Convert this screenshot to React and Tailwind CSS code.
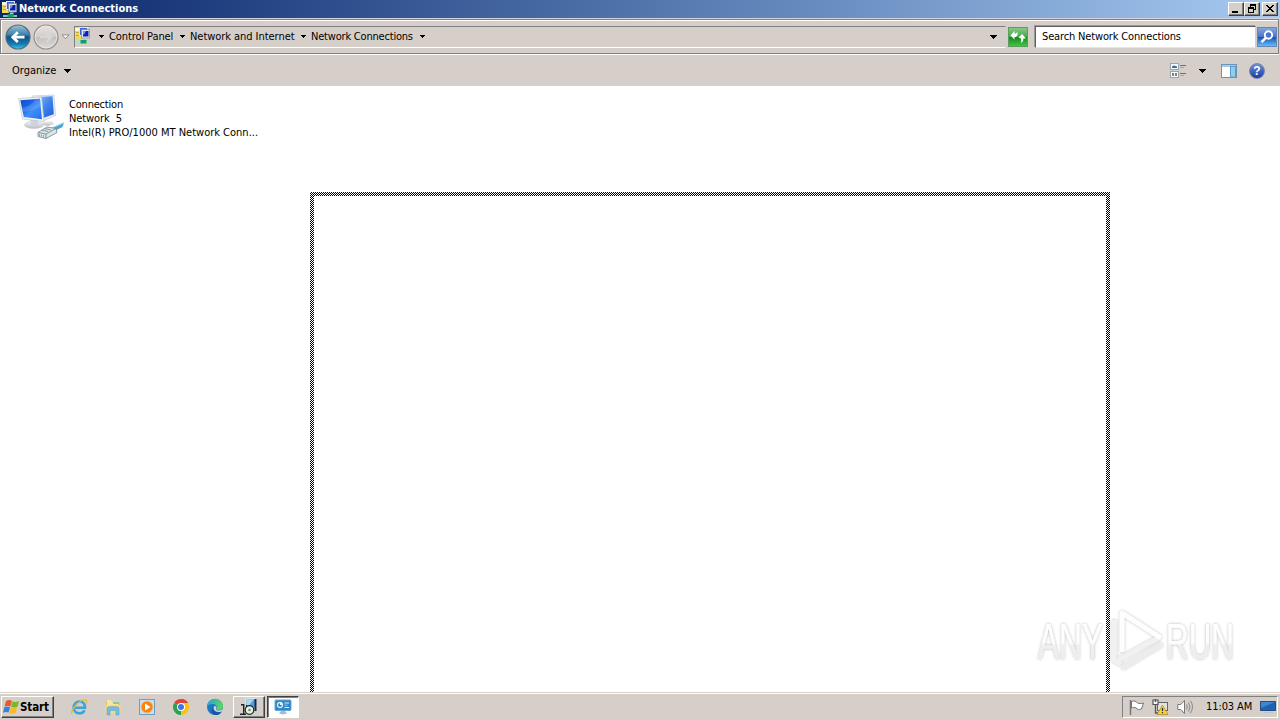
import React from "react";

function Arrow({ className = "" }) {
  return (
    <svg className={"shrink-0 " + className} width="7" height="4" viewBox="0 0 7 4" shapeRendering="crispEdges">
      <path d="M0 0h7v1h-1v1h-1v1h-1v1h-1v-1h-1v-1h-1v-1h-1z" fill="#000" />
    </svg>
  );
}

function SmallArrow({ className = "" }) {
  return (
    <svg className={"shrink-0 " + className} width="5" height="3" viewBox="0 0 5 3" shapeRendering="crispEdges">
      <path d="M0 0h5v1h-1v1h-1v1h-1v-1h-1v-1h-1z" fill="#000" />
    </svg>
  );
}

function NetIcon() {
  return (
    <svg width="16" height="17" viewBox="0 0 16 17" className="shrink-0">
      <path d="M0 1h7v11H0z" fill="#efd95c" />
      <path d="M0 1h6v3H0z" fill="#fff9c8" />
      <path d="M1 5h4v1H1zM1 8h4v1H1z" fill="#c9a42a" />
      <rect x="4.500" y=".5" width="8" height="8" fill="#3b62d8" stroke="#dfe5ee" />
      <rect x="6.500" y="2.500" width="8" height="8.500" fill="#dfe4ef" stroke="#7c86a0" strokeWidth=".7" />
      <rect x="8" y="4" width="5.500" height="5.500" fill="#1020a8" />
      <path d="M8 4h3l-1.800 3.500H8z" fill="#6f93ee" />
      <path d="M8 11.500h3.500V13H8z" fill="#b9bfca" />
      <path d="M1 14.200h14v1.600H1z" fill="#9fe8cf" />
      <path d="M5.500 13h6v3.500h-6z" fill="#0f9f68" />
    </svg>
  );
}

function BackIcon() {
  return (
    <svg width="26" height="26" viewBox="0 0 26 26" className="shrink-0">
      <defs>
        <linearGradient id="back" x1="0" y1="0" x2="0" y2="1">
          <stop offset="0" stopColor="#9dbfd2" />
          <stop offset=".4" stopColor="#3d83ad" />
          <stop offset=".5" stopColor="#0e5389" />
          <stop offset=".8" stopColor="#137eb5" />
          <stop offset="1" stopColor="#42c6ed" />
        </linearGradient>
      </defs>
      <circle cx="13" cy="13" r="12" fill="url(#back)" stroke="#4c6f85" strokeWidth="1.200" />
      <path d="M12.800 8.300L7.800 13.200l5 4.900M8 13.200h11.500" fill="none" stroke="#fff" strokeWidth="2.800" />
    </svg>
  );
}

function ForwardIcon() {
  return (
    <svg width="26" height="26" viewBox="0 0 26 26" className="shrink-0">
      <defs>
        <linearGradient id="fwd" x1="0" y1="0" x2="0" y2="1">
          <stop offset="0" stopColor="#e6e4e2" />
          <stop offset=".48" stopColor="#d2cecb" />
          <stop offset=".5" stopColor="#c3bfbc" />
          <stop offset="1" stopColor="#dedbd9" />
        </linearGradient>
      </defs>
      <circle cx="13" cy="13" r="12" fill="url(#fwd)" stroke="#92908f" strokeWidth="1.200" />
      <circle cx="13" cy="13" r="10.800" fill="none" stroke="#ebe9e7" strokeWidth=".8" />
      <path d="M13.300 8.500l4.700 4.700-4.700 4.700M18 13.200H7" fill="none" stroke="#d9d6d3" strokeWidth="2.300" />
    </svg>
  );
}

function RefreshIcon() {
  return (
    <svg width="20" height="20" viewBox="0 0 20 20" className="shrink-0">
      <defs>
        <linearGradient id="rf" x1="0" y1="0" x2="0" y2="1">
          <stop offset="0" stopColor="#8cc98c" />
          <stop offset=".48" stopColor="#47a84a" />
          <stop offset=".52" stopColor="#148a1c" />
          <stop offset="1" stopColor="#46c943" />
        </linearGradient>
      </defs>
      <rect x=".5" y=".5" width="19" height="19" fill="url(#rf)" stroke="#5c9b62" />
      <path d="M2.500 8.500L6.500 4v2.500h1.300L9.500 5v3L8 10H6.500v2.500z" fill="#fff" />
      <path d="M10.500 10.500L14 7l4 4.500h-2.600c0 2.400-.8 3.800-2.600 4.500.6-1.500.6-3 .2-4.500z" fill="#fff" />
    </svg>
  );
}

function SearchIcon() {
  return (
    <svg width="20" height="20" viewBox="0 0 20 20" className="shrink-0">
      <defs>
        <linearGradient id="se" x1="0" y1="0" x2="0" y2="1">
          <stop offset="0" stopColor="#88a9df" />
          <stop offset=".48" stopColor="#4a75cc" />
          <stop offset=".52" stopColor="#1d4fc0" />
          <stop offset="1" stopColor="#65c6f5" />
        </linearGradient>
      </defs>
      <rect x=".5" y=".5" width="19" height="19" fill="url(#se)" stroke="#6385ba" />
      <circle cx="11.500" cy="8" r="3.700" fill="#4776d2" stroke="#fff" strokeWidth="1.900" />
      <path d="M8.800 10.800L4.500 15.200" stroke="#fff" strokeWidth="2.500" />
    </svg>
  );
}

function ViewIcon() {
  return (
    <svg width="17" height="15" viewBox="0 0 17 15" className="shrink-0">
      <rect x=".5" y=".5" width="8" height="6" fill="#f7f9fb" stroke="#9aa5b0" />
      <path d="M2 3.500l2-1 3 1V5H2z" fill="#2f6fae" />
      <rect x=".5" y="8.500" width="8" height="6" fill="#f7f9fb" stroke="#9aa5b0" />
      <path d="M2 10h2v3H2zM5 10h2v3H5z" fill="#7c818a" />
      <path d="M10 2.500h6M10 10.500h6" stroke="#5d6f92" />
      <path d="M10 4.500h4M10 12.500h4" stroke="#a0a8b8" />
    </svg>
  );
}

function PaneIcon() {
  return (
    <svg width="16" height="14" viewBox="0 0 16 14" className="shrink-0">
      <rect x=".5" y=".5" width="15" height="13" fill="#fff" stroke="#6b94b5" />
      <rect x="1" y="1" width="14" height="2" fill="#a8cae0" />
      <rect x="9.500" y="2.500" width="5" height="10.500" fill="#8fcfee" stroke="#5b9cc8" />
    </svg>
  );
}

function HelpIcon() {
  return (
    <span className="flex size-[16px] shrink-0 items-center justify-center rounded-full border border-[#7b86a6] bg-linear-to-b from-[#6e8edc] to-[#1c3aa2] text-[12px] leading-none font-bold text-white [font-family:'Liberation_Sans',Arial,sans-serif]">
      ?
    </span>
  );
}

function ConnectionIcon() {
  return (
    <svg width="48" height="48" viewBox="0 0 48 48" className="shrink-0">
      <defs>
        <linearGradient id="scr" x1="0" y1="0" x2=".9" y2="1">
          <stop offset="0" stopColor="#0f4cc4" />
          <stop offset=".4" stopColor="#1c66e6" />
          <stop offset=".6" stopColor="#3f8ef8" />
          <stop offset="1" stopColor="#2a74ea" />
        </linearGradient>
        <linearGradient id="scrBack" x1="0" y1="0" x2="1" y2="1">
          <stop offset="0" stopColor="#8dbcf6" />
          <stop offset=".5" stopColor="#3d84ee" />
          <stop offset="1" stopColor="#1c5edc" />
        </linearGradient>
        <linearGradient id="base" x1="0" y1="0" x2="0" y2="1">
          <stop offset="0" stopColor="#f3f4f6" />
          <stop offset="1" stopColor="#b7bdc5" />
        </linearGradient>
      </defs>
      <path d="M26 28l9-1 2 3-6 2-5-1z" fill="url(#base)" />
      <path d="M15 2L37 1l1.500 20.500L26 27z" fill="#eceef1" stroke="#c4c9d0" strokeWidth=".7" />
      <path d="M20 3l15.500-.7 1.300 18L26 24z" fill="url(#scrBack)" />
      <ellipse cx="17" cy="31" rx="9.500" ry="3.500" fill="url(#base)" stroke="#c2c7ce" strokeWidth=".6" />
      <path d="M13 25l8 1v5h-7z" fill="#d0d4da" />
      <path d="M1.500 4.500L24.500 3 27 27.500 5.500 25z" fill="#f1f2f5" stroke="#bfc5cf" strokeWidth=".7" />
      <path d="M3.300 6.300L23 4.800l2 20.400L6.800 23z" fill="url(#scr)" />
      <path d="M4.500 14q9-1 14-9l4.500-.2.700 7Q17 17 5.500 18z" fill="#7db4fb" opacity=".35" />
      <path d="M35 33.500l12-5-1.500 4.500-9 4.500z" fill="#4ba4cd" />
      <path d="M36 33.500l10-4.500" stroke="#a1e1f4" strokeWidth="1.200" />
      <path d="M21 38.500l9-5.500 9 1.500 1 4-11 6-8-2z" fill="#dce5e8" stroke="#6f878f" strokeWidth=".8" />
      <path d="M21 38.500l8 1.500 10-5.500M29 40v4.500M25 36l6 1.500M28 34.500l6 1.500" fill="none" stroke="#6f878f" strokeWidth=".8" />
      <path d="M22.500 40v2M24.500 40.500v2M26.500 41v2" stroke="#b69a50" strokeWidth=".9" />
    </svg>
  );
}

function CaptionButton({ children, className = "" }) {
  return (
    <div className={"flex h-[14px] w-[16px] items-center justify-center border border-t-white border-r-[#404040] border-b-[#404040] border-l-white bg-[#d4d0c8] shadow-[inset_-1px_-1px_#808080] " + className}>
      <svg width="14" height="12" viewBox="0 0 14 12" shapeRendering="crispEdges" className="shrink-0">
        {children}
      </svg>
    </div>
  );
}

function TitleBar() {
  return (
    <div className="flex h-[18px] items-center bg-linear-to-r from-[#0a246a] to-[#a6caf0] pl-[2px] pr-[2px]">
      <NetIcon />
      <span className="ml-[1px] w-[140px] text-[11px] leading-[18px] font-bold whitespace-nowrap text-white">
        Network Connections
      </span>
      <div className="ml-auto flex">
        <CaptionButton>
          <path d="M3 8h6v2H3z" />
        </CaptionButton>
        <CaptionButton>
          <path d="M5 1h6v6H9V6h1V3H6v1H5zM3 4h6v6H3zM4 6v3h4V6z" fillRule="evenodd" />
        </CaptionButton>
        <CaptionButton className="ml-[2px]">
          <path d="M3 2h2v1h1v1h2V3h1V2h2v1h-1v1H9v1H8v1h1v1h1v1h1v1H9V8H8V7H6v1H5v1H3V8h1V7h1V6h1V5H5V4H4V3H3z" />
        </CaptionButton>
      </div>
    </div>
  );
}

function AddressBar() {
  return (
    <div className="flex h-[35px] items-center border border-[#808080] pl-[4px] shadow-[inset_1px_1px_#fff,0_1px_#fff]">
      <BackIcon />
      <div className="ml-[2px] flex">
        <ForwardIcon />
      </div>
      <svg width="9" height="6" viewBox="0 0 9 6" className="ml-[2px] shrink-0">
        <path d="M1 .8h7L4.500 4.800z" fill="#f4f2f0" stroke="#8a8784" strokeWidth=".9" />
      </svg>
      <div className="ml-[4px] flex h-[22px] w-[932px] items-center border border-t-[#808080] border-r-transparent border-b-white border-l-[#808080]">
        <div className="-mt-[3px] flex">
          <NetIcon />
        </div>
        <SmallArrow className="ml-[8px]" />
        <span className="ml-[5px] w-[66px] tracking-[-0.1px] whitespace-nowrap">Control Panel</span>
        <SmallArrow className="ml-[5px]" />
        <span className="ml-[5px] w-[106px] tracking-[-0.05px] whitespace-nowrap">Network and Internet</span>
        <SmallArrow className="ml-[5px]" />
        <span className="ml-[5px] w-[104px] tracking-[-0.2px] whitespace-nowrap">Network Connections</span>
        <SmallArrow className="ml-[5px]" />
        <Arrow className="mr-[8px] ml-auto" />
      </div>
      <div className="ml-[2px] flex">
        <RefreshIcon />
      </div>
      <div className="ml-[7px] flex h-[22px] w-[221px] items-center border border-t-[#606060] border-r-[#d4d0c8] border-b-[#e8e4de] border-l-[#606060] bg-white pl-[6px] shadow-[-1px_-1px_#9c9894]">
        <span className="tracking-[-0.15px] whitespace-nowrap">Search Network Connections</span>
      </div>
      <div className="ml-[1px] flex">
        <SearchIcon />
      </div>
    </div>
  );
}

function CommandBar() {
  return (
    <div className="flex h-[31px] items-center pl-[12px]">
      <span className="w-[46px] whitespace-nowrap">Organize</span>
      <Arrow className="ml-[6px]" />
      <div className="ml-auto flex items-center pr-[15px]">
        <ViewIcon />
        <Arrow className="ml-[12px]" />
        <div className="ml-[15px] flex">
          <PaneIcon />
        </div>
        <div className="ml-[12px] flex">
          <HelpIcon />
        </div>
      </div>
    </div>
  );
}

function DragOutline() {
  const dots = "bg-[repeating-conic-gradient(#000_0_25%,#fff_0_50%)] bg-[length:2px_2px]";
  return (
    <div className="absolute top-[106px] left-[310px] flex h-[500px] w-[800px] flex-col">
      <div className={"h-[4px] w-full " + dots} />
      <div className="flex flex-1 justify-between">
        <div className={"w-[4px] " + dots} />
        <div className={"w-[4px] " + dots} />
      </div>
    </div>
  );
}

function Watermark() {
  return (
    <svg width="250" height="80" viewBox="0 0 250 80" className="absolute top-[516px] left-[1030px]">
      <defs>
        <filter id="halo" x="-10%" y="-20%" width="120%" height="140%">
          <feDropShadow dx="0" dy="0" stdDeviation="1.500" floodColor="#000" floodOpacity=".3" />
        </filter>
        <linearGradient id="wm" x1="0" y1="0" x2="0" y2="1">
          <stop offset="0" stopColor="#fff" />
          <stop offset=".52" stopColor="#fdfdfd" />
          <stop offset=".56" stopColor="#efefef" />
          <stop offset="1" stopColor="#ececec" />
        </linearGradient>
      </defs>
      <g filter="url(#halo)" fill="url(#wm)" fontFamily="'Liberation Sans', Arial, sans-serif" fontSize="50">
        <text x="8" y="57" textLength="65" lengthAdjust="spacingAndGlyphs">ANY</text>
        <text x="136" y="57" textLength="68" lengthAdjust="spacingAndGlyphs">RUN</text>
      </g>
      <g filter="url(#halo)" fill="none" strokeWidth="4.500" strokeLinejoin="round">
        <path d="M84 18v40l7 4M88 58l40-22" stroke="#f1f1f1" />
        <path d="M92 66l40-24" stroke="#ececec" />
        <path d="M92 50V11l39 25" stroke="#fefefe" />
      </g>
    </svg>
  );
}

function FileArea() {
  return (
    <div className="relative h-[606px] overflow-hidden bg-white">
      <div className="flex pt-[8px] pl-[17px]">
        <ConnectionIcon />
        <div className="ml-[4px] flex flex-col pt-[4px] leading-[14px] whitespace-pre">
          <span className="tracking-[-0.2px]">Connection</span>
          <span className="tracking-[-0.1px]">Network  5</span>
          <span>Intel(R) PRO/1000 MT Network Conn...</span>
        </div>
      </div>
      <DragOutline />
      <Watermark />
    </div>
  );
}

function StartFlag() {
  return (
    <svg width="17" height="16" viewBox="0 0 17 16" className="shrink-0">
      <path d="M3 2.200C5 .7 7.200.9 8.900 1.900L7.400 7.400C5.600 6.400 3.600 6.500 1.500 7.600z" fill="#e8582a" />
      <path d="M9.500 2.300c2 1 4.200.9 6.600-.3l-1.600 5.700c-2.200 1.100-4.400 1.100-6.500.1z" fill="#78b82c" />
      <path d="M1.300 8.300c2-1.100 4-1.200 5.800-.2L5.600 13.600c-1.800-1-3.800-.9-5.600.2z" fill="#3f7fd8" />
      <path d="M7.700 8.600c2.200 1 4.300.9 6.500-.1l-1.600 5.500c-2.200 1.100-4.300 1.100-6.400.1z" fill="#f7bd26" />
    </svg>
  );
}

function IEIcon() {
  return (
    <svg width="18" height="18" viewBox="0 0 18 18">
      <path d="M5.200 9.800H15C15.200 5.800 12.700 3.500 9.600 3.500C6.300 3.500 3.700 6 3.700 9.500C3.700 13 6.300 15.300 9.500 15.300C11.800 15.300 13.600 14.200 14.500 12.200" fill="none" stroke="#3ba3de" strokeWidth="2.600" />
      <path d="M2 15.800C.200 12.500 9.500 1.500 15.500 1.800C17 2 17 4 16 5.800" fill="none" stroke="#dfb83f" strokeWidth="1.300" />
    </svg>
  );
}

function FolderIcon() {
  return (
    <svg width="18" height="18" viewBox="0 0 18 18">
      <path d="M2 3h5l1 1.500h8V14H2z" fill="#e6c45e" />
      <path d="M3 2h4l1 2h6v5H3z" fill="#f8e7a2" />
      <path d="M9 4h6v2H9z" fill="#8fc7a2" />
      <path d="M1.500 7h15v8h-15z" fill="#f3d980" />
      <path d="M3 10.500c0-1 1-1.700 2-1.700h8c1 0 2 .7 2 1.700V17h-3v-4.500H6V17H3z" fill="#74bde2" stroke="#4d9dca" strokeWidth=".5" />
    </svg>
  );
}

function MediaIcon() {
  return (
    <svg width="18" height="18" viewBox="0 0 18 18">
      <rect x="1.500" y="1.500" width="15" height="15" fill="#c8dff0" stroke="#6a9fc8" />
      <circle cx="9" cy="9" r="6" fill="#f58515" stroke="#fbc47c" strokeWidth=".8" />
      <path d="M7 5.500v7l5.500-3.500z" fill="#fff" />
    </svg>
  );
}

function ChromeIcon() {
  return (
    <svg width="18" height="18" viewBox="0 0 18 18">
      <path d="M9 9L2.070 5A8 8 0 0 1 15.930 5z" fill="#e24335" />
      <path d="M9 9L15.930 5A8 8 0 0 1 9 17z" fill="#fbc116" />
      <path d="M9 9L9 17A8 8 0 0 1 2.070 5z" fill="#2da24c" />
      <path d="M9 5h6.930L12.500 11z" fill="#fbc116" />
      <path d="M9 5h6.930A8 8 0 0 0 9 1z" fill="#e24335" />
      <circle cx="9" cy="9" r="4" fill="#fff" />
      <circle cx="9" cy="9" r="3" fill="#3a78e6" />
    </svg>
  );
}

function EdgeIcon() {
  return (
    <svg width="18" height="18" viewBox="0 0 18 18">
      <defs>
        <linearGradient id="edge" x1="0" y1="0" x2="1" y2=".3">
          <stop offset="0" stopColor="#2a9de0" />
          <stop offset="1" stopColor="#59d65a" />
        </linearGradient>
      </defs>
      <circle cx="9" cy="9" r="8" fill="#1a78cc" />
      <path d="M1 9a8 8 0 0 1 16-.5c0 2.500-2 3.700-4 3.700-1.800 0-3-.5-2.500-1.200C11.800 8.500 10 6 7 6 4 6 1.500 7 1 9z" fill="url(#edge)" />
      <path d="M8 8.500c-1 2 0 5 3.500 5.700 2 .3 3.500 0 4.600-.8A8 8 0 0 1 9 17c-4-1-5-6-1-8.500z" fill="#1556a6" />
      <path d="M9 8c1.500 0 1.800 1.800 1.200 3-.5.8.6 1.500 2.800 1.500 2.400 0 3.600-1 4-1.700-.3 1.400-1 2.300-2 3-3 1-7.500-.5-7.500-3.500C7.500 9 8 8 9 8z" fill="#d6cfc9" />
    </svg>
  );
}

function InstallerIcon() {
  return (
    <svg width="20" height="18" viewBox="0 0 20 18">
      <rect x="7" y="1" width="10" height="9" fill="#4f9fd8" stroke="#e6eef4" />
      <path d="M8 2h6l-4 6H8z" fill="#a8d6f4" />
      <path d="M15.500 1h2v12h-2z" fill="#16294a" />
      <path d="M2 6.700h2.700V16M1 16.300h6" fill="none" stroke="#222" strokeWidth="1.400" />
      <path d="M7.500 7v5" stroke="#222" strokeWidth="1.200" />
      <circle cx="10.500" cy="12" r="4.300" fill="#e8eee9" stroke="#222" strokeWidth="1.200" />
      <circle cx="10.500" cy="12" r="1.300" fill="#58a05c" />
    </svg>
  );
}

function PanelIcon() {
  return (
    <svg width="18" height="16" viewBox="0 0 18 16">
      <rect x="1" y="1" width="16" height="10.500" rx="1" fill="#2f84c4" stroke="#60a9d8" />
      <circle cx="6" cy="6" r="2.500" fill="none" stroke="#cce9f7" strokeWidth="1.300" />
      <path d="M6 6V3.300A2.700 2.700 0 0 1 8.700 6z" fill="#e8f6fc" />
      <path d="M10.500 4h4.500M10.500 8.500h4.500" stroke="#d9f0fa" strokeWidth="1.200" />
      <path d="M10.500 6.200h3" stroke="#9fd0ec" />
      <path d="M7 12h4l2 2.500-4 1-4-1z" fill="#9fbdd0" />
    </svg>
  );
}

function Tray() {
  return (
    <div className="flex h-[22px] w-[156px] items-center border border-t-[#808080] border-r-white border-b-white border-l-[#808080] pl-[6px]">
      <svg width="16" height="16" viewBox="0 0 16 16" className="shrink-0">
        <path d="M1.500 1v15" stroke="#757575" strokeWidth="1.500" />
        <path d="M2.500 2.500C5 1.500 7 2 8.500 4 10 5 12 4.500 14.500 4L12.500 10C10 11 8.500 10.500 7 9 5.500 8 4 8.500 2.500 9z" fill="#fff" stroke="#757575" />
      </svg>
      <svg width="17" height="16" viewBox="0 0 17 16" className="ml-[7px] shrink-0">
        <rect x="5.500" y="3.500" width="10" height="8" fill="#e4e2df" stroke="#666" />
        <path d="M1 1h5v4.500H1z" fill="#f4f4f4" stroke="#555" strokeWidth="1.200" />
        <path d="M3.500 5.500V14H8M3.500 0v3" fill="none" stroke="#555" strokeWidth="1.300" />
        <path d="M10.500 6l5.500 9.500H5z" fill="#fbd330" stroke="#a8861d" strokeWidth=".7" />
        <path d="M10.500 9v3M10.500 13v1.300" stroke="#333" strokeWidth="1.300" />
      </svg>
      <svg width="16" height="16" viewBox="0 0 16 16" className="ml-[8px] shrink-0">
        <path d="M.8 5.500h3L7.500 1.500v13L3.800 10.500h-3z" fill="#fff" stroke="#777" />
        <path d="M9.500 5.500q1.500 2.500 0 5M11.500 3.500q3 4.500 0 9M13.500 1.800q4 6 0 12.400" fill="none" stroke="#888" />
      </svg>
      <span className="ml-[13px] w-[46px] tracking-[-0.1px] whitespace-nowrap">11:03 AM</span>
      <svg width="16" height="14" viewBox="0 0 16 14" className="ml-[8px] shrink-0">
        <path d="M.5 1.500h15v9h-15z" fill="#1c62b6" stroke="#274b78" />
        <path d="M1 2h14L1 8z" fill="#3f86d0" />
        <path d="M3 12h10v1H3z" fill="#b9c7d3" />
      </svg>
    </div>
  );
}

function Taskbar() {
  return (
    <div className="flex h-[28px] items-center border-t border-[#d4d0c8] pl-[1px] shadow-[inset_0_1px_#fff]">
      <div className="mt-[1px] flex h-[22px] w-[53px] items-center border border-t-white border-r-[#404040] border-b-[#404040] border-l-white pl-[1px] shadow-[inset_-1px_-1px_#808080]">
        <StartFlag />
        <span className="text-[11.500px] font-bold tracking-[-0.1px]">Start</span>
      </div>
      <div className="mt-[1px] ml-[16px] flex gap-[16px]">
        <IEIcon />
        <FolderIcon />
        <MediaIcon />
        <ChromeIcon />
        <EdgeIcon />
      </div>
      <div className="mt-[1px] ml-[9px] flex h-[22px] w-[32px] items-center justify-center border border-t-white border-r-[#404040] border-b-[#404040] border-l-white shadow-[inset_-1px_-1px_#808080]">
        <InstallerIcon />
      </div>
      <div className="mt-[1px] ml-[2px] flex h-[22px] w-[32px] items-center justify-center border border-t-[#404040] border-r-white border-b-white border-l-[#404040] bg-white shadow-[inset_1px_1px_#808080]">
        <PanelIcon />
      </div>
      <div className="mt-[1px] mr-[2px] ml-auto flex">
        <Tray />
      </div>
    </div>
  );
}

export default function App() {
  return (
    <div className="flex h-[720px] w-[1280px] flex-col overflow-hidden bg-[#d6cfc9] text-[11px] leading-[14px] text-black [font-family:'DejaVu_Sans_Condensed','DejaVu_Sans',sans-serif] [font-stretch:condensed]">
      <TitleBar />
      <div className="h-px bg-[#d8d4dc]" />
      <div className="h-[36px] pr-px pb-px">
        <AddressBar />
      </div>
      <CommandBar />
      <FileArea />
      <Taskbar />
    </div>
  );
}
